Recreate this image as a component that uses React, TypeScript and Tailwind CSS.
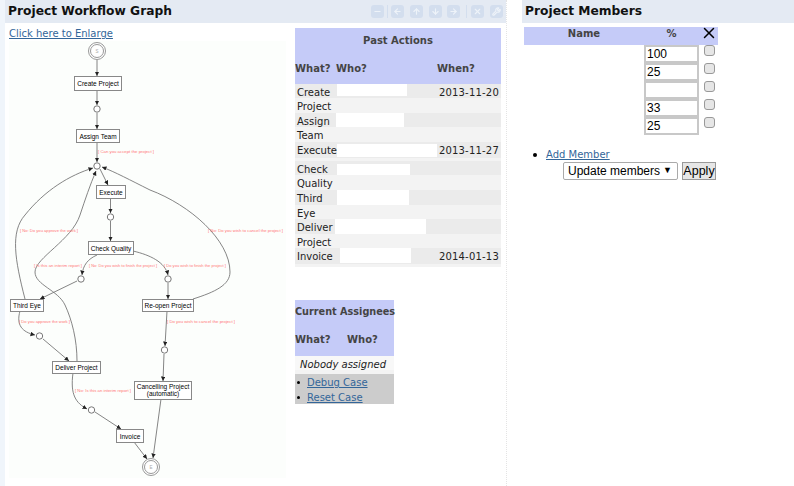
import { Minus, ArrowLeft, ArrowUp, ArrowDown, ArrowRight, X, Wrench } from "lucide-react";

const verdana = "font-['DejaVu_Sans',sans-serif]";

function ToolIcon({ children, ml }: { children: React.ReactNode; ml: string }) {
  return (
    <span className={`flex h-[13px] w-[13px] items-center justify-center rounded-[3px] bg-[#d3deee] text-[#eef3f9] ${ml}`}>
      {children}
    </span>
  );
}

const nodes = [
  { x: 74, y: 76, w: 47, h: 14, t: ["Create Project"] },
  { x: 76, y: 129, w: 43, h: 13, t: ["Assign Team"] },
  { x: 96, y: 185, w: 29, h: 13, t: ["Execute"] },
  { x: 88, y: 241, w: 45, h: 13, t: ["Check Quality"] },
  { x: 10, y: 299, w: 33, h: 12, t: ["Third Eye"] },
  { x: 142, y: 299, w: 51, h: 12, t: ["Re-open Project"] },
  { x: 52, y: 361, w: 48, h: 12, t: ["Deliver Project"] },
  { x: 134, y: 381, w: 57, h: 18, t: ["Cancelling Project", "(automatic)"] },
  { x: 116, y: 429, w: 27, h: 13, t: ["Invoice"] },
];
const circles = [
  [97, 109], [97, 166], [110.5, 217], [81, 279], [168, 279], [39.5, 336], [164.5, 350], [91.5, 410],
];
const edges = [
  "M97,60 L97,76", "M97,90 L97,105", "M97,113 L97,129", "M97,142 L97,162", "M100,169 L108,185",
  "M110.5,198 L110.5,213", "M110.5,221 L110.5,241", "M97,255 C88,259 83,265 82,275", "M77,281 L40,299",
  "M133,251 C150,255 165,262 168,275", "M168,283 L168,299",
  "M25,299 C15,260 10,232 25,215 C45,190 70,175 93,168",
  "M77,361 C77,340 72,320 65,305 C58,290 35,285 35,272 C35,258 72,240 80,215 C85,200 90,185 96,171",
  "M193,299 C215,292 230,285 230,272 C230,240 190,205 150,190 C130,180 115,172 102,167",
  "M20,311 C16,325 22,332 35,335", "M43,339 L69,361", "M167,311 L165,346", "M164,354 L163,381",
  "M73,373 C70,395 76,403 87,409", "M95,412 L121,429", "M134,442 L147,459", "M161,399 L153,458",
];
const labels: [number, number, number, string][] = [
  [98, 153, 56, "[ Can you accept the project ]"],
  [20, 232, 58, "[ No: Do you approve the work ]"],
  [208, 232, 75, "[ No: Do you wish to cancel the project ]"],
  [34, 267, 48, "[ Is this an interim report ]"],
  [89, 267, 68, "[ No: Do you wish to finish the project ]"],
  [164, 267, 62, "[ Do you wish to finish the project ]"],
  [19, 323, 51, "[ Do you approve the work ]"],
  [167, 323, 68, "[ Do you wish to cancel the project ]"],
  [75, 392, 56, "[ No: Is this an interim report ]"],
];

function Graph() {
  return (
    <svg width="277" height="437" viewBox="9 41 277 437" className="block bg-[#fcfefc]">
      <defs>
        <marker id="a" markerWidth="6" markerHeight="6" refX="5" refY="2.5" orient="auto">
          <path d="M0,0 L5,2.5 L0,5 Z" fill="#222" />
        </marker>
      </defs>
      {edges.map((d, i) => (
        <path key={i} d={d} fill="none" stroke="#777" strokeWidth="0.9" markerEnd="url(#a)" />
      ))}
      {nodes.map((n) => (
        <g key={n.x}>
          <rect x={n.x + 0.5} y={n.y + 0.5} width={n.w} height={n.h} fill="#fff" stroke="#888" />
          {n.t.map((s, i) => (
            <text
              key={s}
              x={n.x + n.w / 2 + 0.5}
              y={n.t.length > 1 ? n.y + 8 + i * 7 : n.y + n.h / 2 + 3}
              textAnchor="middle"
              fontSize="6.5"
              fontFamily="'Liberation Sans', sans-serif"
              fill="#000"
            >
              {s}
            </text>
          ))}
        </g>
      ))}
      {circles.map(([x, y]) => (
        <circle key={`${x}-${y}`} cx={x} cy={y} r="3.2" fill="#fff" stroke="#777" />
      ))}
      {[[97, 51, "S"], [151, 467, "E"]].map(([x, y, s]) => (
        <g key={s as string}>
          <circle cx={x as number} cy={y as number} r="8.5" fill="#fff" stroke="#999" />
          <circle cx={x as number} cy={y as number} r="6.5" fill="#fff" stroke="#999" />
          <text x={x as number} y={(y as number) + 2} textAnchor="middle" fontSize="4.5" fill="#aaa" fontFamily="'Liberation Sans', sans-serif">{s}</text>
        </g>
      ))}
      {labels.map(([x, y, w, s]) => (
        <text key={s} x={x} y={y} textLength={w} lengthAdjust="spacingAndGlyphs" fontSize="4" fill="#f77" fontFamily="'Liberation Sans', sans-serif">
          {s}
        </text>
      ))}
    </svg>
  );
}

const rows: { what: string; patch: string; when?: string; h: string; dark: boolean }[] = [
  { what: "Create", patch: "ml-[1px] h-[12px] w-[70px]", when: "2013-11-20", h: "h-[14px]", dark: true },
  { what: "Project", patch: "", h: "h-[15px]", dark: false },
  { what: "Assign", patch: "h-[14px] w-[68px]", h: "h-[14px]", dark: true },
  { what: "Team", patch: "", h: "h-[15px]", dark: false },
  { what: "Execute", patch: "ml-[1px] h-[13px] mt-[2px] w-[100px]", when: "2013-11-27", h: "h-[16px]", dark: true },
  { what: "", patch: "", h: "h-[3px]", dark: false },
  { what: "Check", patch: "ml-[1px] h-[11px] mt-[3px] w-[73px]", h: "h-[14px]", dark: true },
  { what: "Quality", patch: "", h: "h-[15px]", dark: false },
  { what: "Third", patch: "ml-[1px] h-[15px] w-[72px]", h: "h-[15px]", dark: true },
  { what: "Eye", patch: "", h: "h-[14px]", dark: false },
  { what: "Deliver", patch: "ml-[-1px] h-[15px] w-[91px]", h: "h-[15px]", dark: true },
  { what: "Project", patch: "", h: "h-[14px]", dark: false },
  { what: "Invoice", patch: "ml-[4px] h-[15px] w-[71px]", when: "2014-01-13", h: "h-[16px]", dark: true },
  { what: "", patch: "", h: "h-[3px]", dark: false },
];

export default function App() {
  return (
    <div className={`flex h-[486px] w-[794px] overflow-hidden bg-white text-[10px] text-[#222] ${verdana}`}>
      <div className="h-full w-[5px] shrink-0 bg-[#f0f5fb]" />
      <div className="h-full w-[502px] shrink-0 border-r border-dotted border-[#e4e4e4]">
        <div className="flex h-[23px] items-center justify-between bg-[#e4eaf3] pr-[3px] pb-[1px] pl-[3px]">
          <h1 className="text-[12.25px] leading-none font-bold text-[#111]">Project Workflow Graph</h1>
          <div className="flex items-center pt-[1px]">
            <ToolIcon ml=""><Minus size={9} strokeWidth={3} /></ToolIcon>
            <span className="ml-[3px] h-[13px] w-px bg-[#d3deee]" />
            <ToolIcon ml="ml-[3px]"><ArrowLeft size={9} strokeWidth={3} /></ToolIcon>
            <ToolIcon ml="ml-[6px]"><ArrowUp size={9} strokeWidth={3} /></ToolIcon>
            <ToolIcon ml="ml-[6px]"><ArrowDown size={9} strokeWidth={3} /></ToolIcon>
            <ToolIcon ml="ml-[5px]"><ArrowRight size={9} strokeWidth={3} /></ToolIcon>
            <span className="ml-[6px] h-[13px] w-px bg-[#d3deee]" />
            <ToolIcon ml="ml-[4px]"><X size={9} strokeWidth={3} /></ToolIcon>
            <ToolIcon ml="ml-[6px]"><Wrench size={9} strokeWidth={3} /></ToolIcon>
          </div>
        </div>
        <div className="flex pl-[4px]">
          <div className="w-[286px] shrink-0">
            <a className="mt-[4px] block h-[14px] leading-[14px] text-[#33669a] underline">Click here to Enlarge</a>
            <Graph />
          </div>
          <div className="mt-[5px] w-[206px] shrink-0">
            <div className="h-[56px] bg-[#c5cbf8] font-bold text-[#444]">
              <div className="pt-[6px] text-center leading-[14px]">Past Actions</div>
              <div className="mt-[14px] flex leading-[14px]">
                <span className="w-[41px]">What?</span>
                <span className="w-[101px]">Who?</span>
                <span>When?</span>
              </div>
            </div>
            {rows.map((r, i) => (
              <div key={i} className={`flex leading-[17px] ${r.h} ${r.dark ? "bg-[#ebebeb]" : "bg-[#f3f3f3]"}`}>
                <span className="w-[41px] shrink-0 whitespace-nowrap pl-[2px]">{r.what}</span>
                <span className="w-[101px] shrink-0">
                  {r.patch && <span className={`block bg-white ${r.patch}`} />}
                </span>
                <span className="w-[64px] shrink-0 whitespace-nowrap pr-[2px] text-right tracking-[0.2px]">{r.when}</span>
              </div>
            ))}
            <div className="mt-[33px] w-[99px]">
              <div className="h-[56px] bg-[#c5cbf8] font-bold text-[#444]">
                <div className="pt-[5px] text-[9.7px] leading-[14px] whitespace-nowrap">Current Assignees</div>
                <div className="mt-[14px] flex leading-[14px]">
                  <span className="w-[52px]">What?</span>
                  <span>Who?</span>
                </div>
              </div>
              <div className="h-[14px] bg-[#f8f8f8] pl-[5px] leading-[17px] whitespace-nowrap italic">Nobody assigned</div>
              <div className="h-[4px] bg-[#f3f3f3]" />
              <ul className="h-[30px] list-none bg-[#cccccc] pt-[1px] leading-[15px]">
                <li className="flex items-center"><span className="mr-[7px] ml-[2px] h-[3px] w-[3px] rounded-full bg-black" /><a className="text-[#33669a] underline">Debug Case</a></li>
                <li className="flex items-center"><span className="mr-[7px] ml-[2px] h-[3px] w-[3px] rounded-full bg-black" /><a className="text-[#33669a] underline">Reset Case</a></li>
              </ul>
            </div>
          </div>
        </div>
      </div>
      <div className="ml-[15px] h-full flex-1">
        <div className="flex h-[23px] items-center bg-[#e4eaf3] pb-[1px] pl-[3px]">
          <h2 className="text-[12.25px] leading-none font-bold text-[#111]">Project Members</h2>
        </div>
        <div className="mt-[4px] ml-[2px] w-[194px]">
          <div className="flex h-[18px] items-center bg-[#c5cbf8] pb-[6px] font-bold text-[#444]">
            <span className="w-[120px] text-center">Name</span>
            <span className="w-[55px] text-center">%</span>
            <X size={18} strokeWidth={2} className="ml-[1px] text-black" />
          </div>
          {["100", "25", "", "33", "25"].map((v, i) => (
            <div key={i} className="flex h-[18px]">
              <input
                readOnly
                value={v}
                className="ml-[120px] h-[18px] w-[55px] border-2 border-[#c8c8c8] bg-white px-[1px] font-['Liberation_Sans',sans-serif] text-[12px] leading-none text-black"
              />
              <span className="ml-[5px] h-[11px] w-[11px] rounded-[3px] border border-[#999] bg-[#e6e6e6]" />
            </div>
          ))}
        </div>
        <div className="mt-[13px] flex items-center pl-[11px] leading-[14px]">
          <span className="mr-[9px] h-[4px] w-[4px] rounded-full bg-black" />
          <a className="text-[#33669a] underline">Add Member</a>
        </div>
        <div className="flex items-center pl-[41px] font-['Liberation_Sans',sans-serif] text-[12px] text-black">
          <span className="flex h-[18px] w-[115px] items-center justify-between rounded-[2px] border border-[#aaa] bg-white pr-[5px] pl-[4px] whitespace-nowrap">
            Update members <span className="text-[9px]">▼</span>
          </span>
          <button className="ml-[4px] h-[18px] w-[34px] border border-[#999] bg-[#e6e6e6] text-[12.5px] leading-none">Apply</button>
        </div>
      </div>
    </div>
  );
}
